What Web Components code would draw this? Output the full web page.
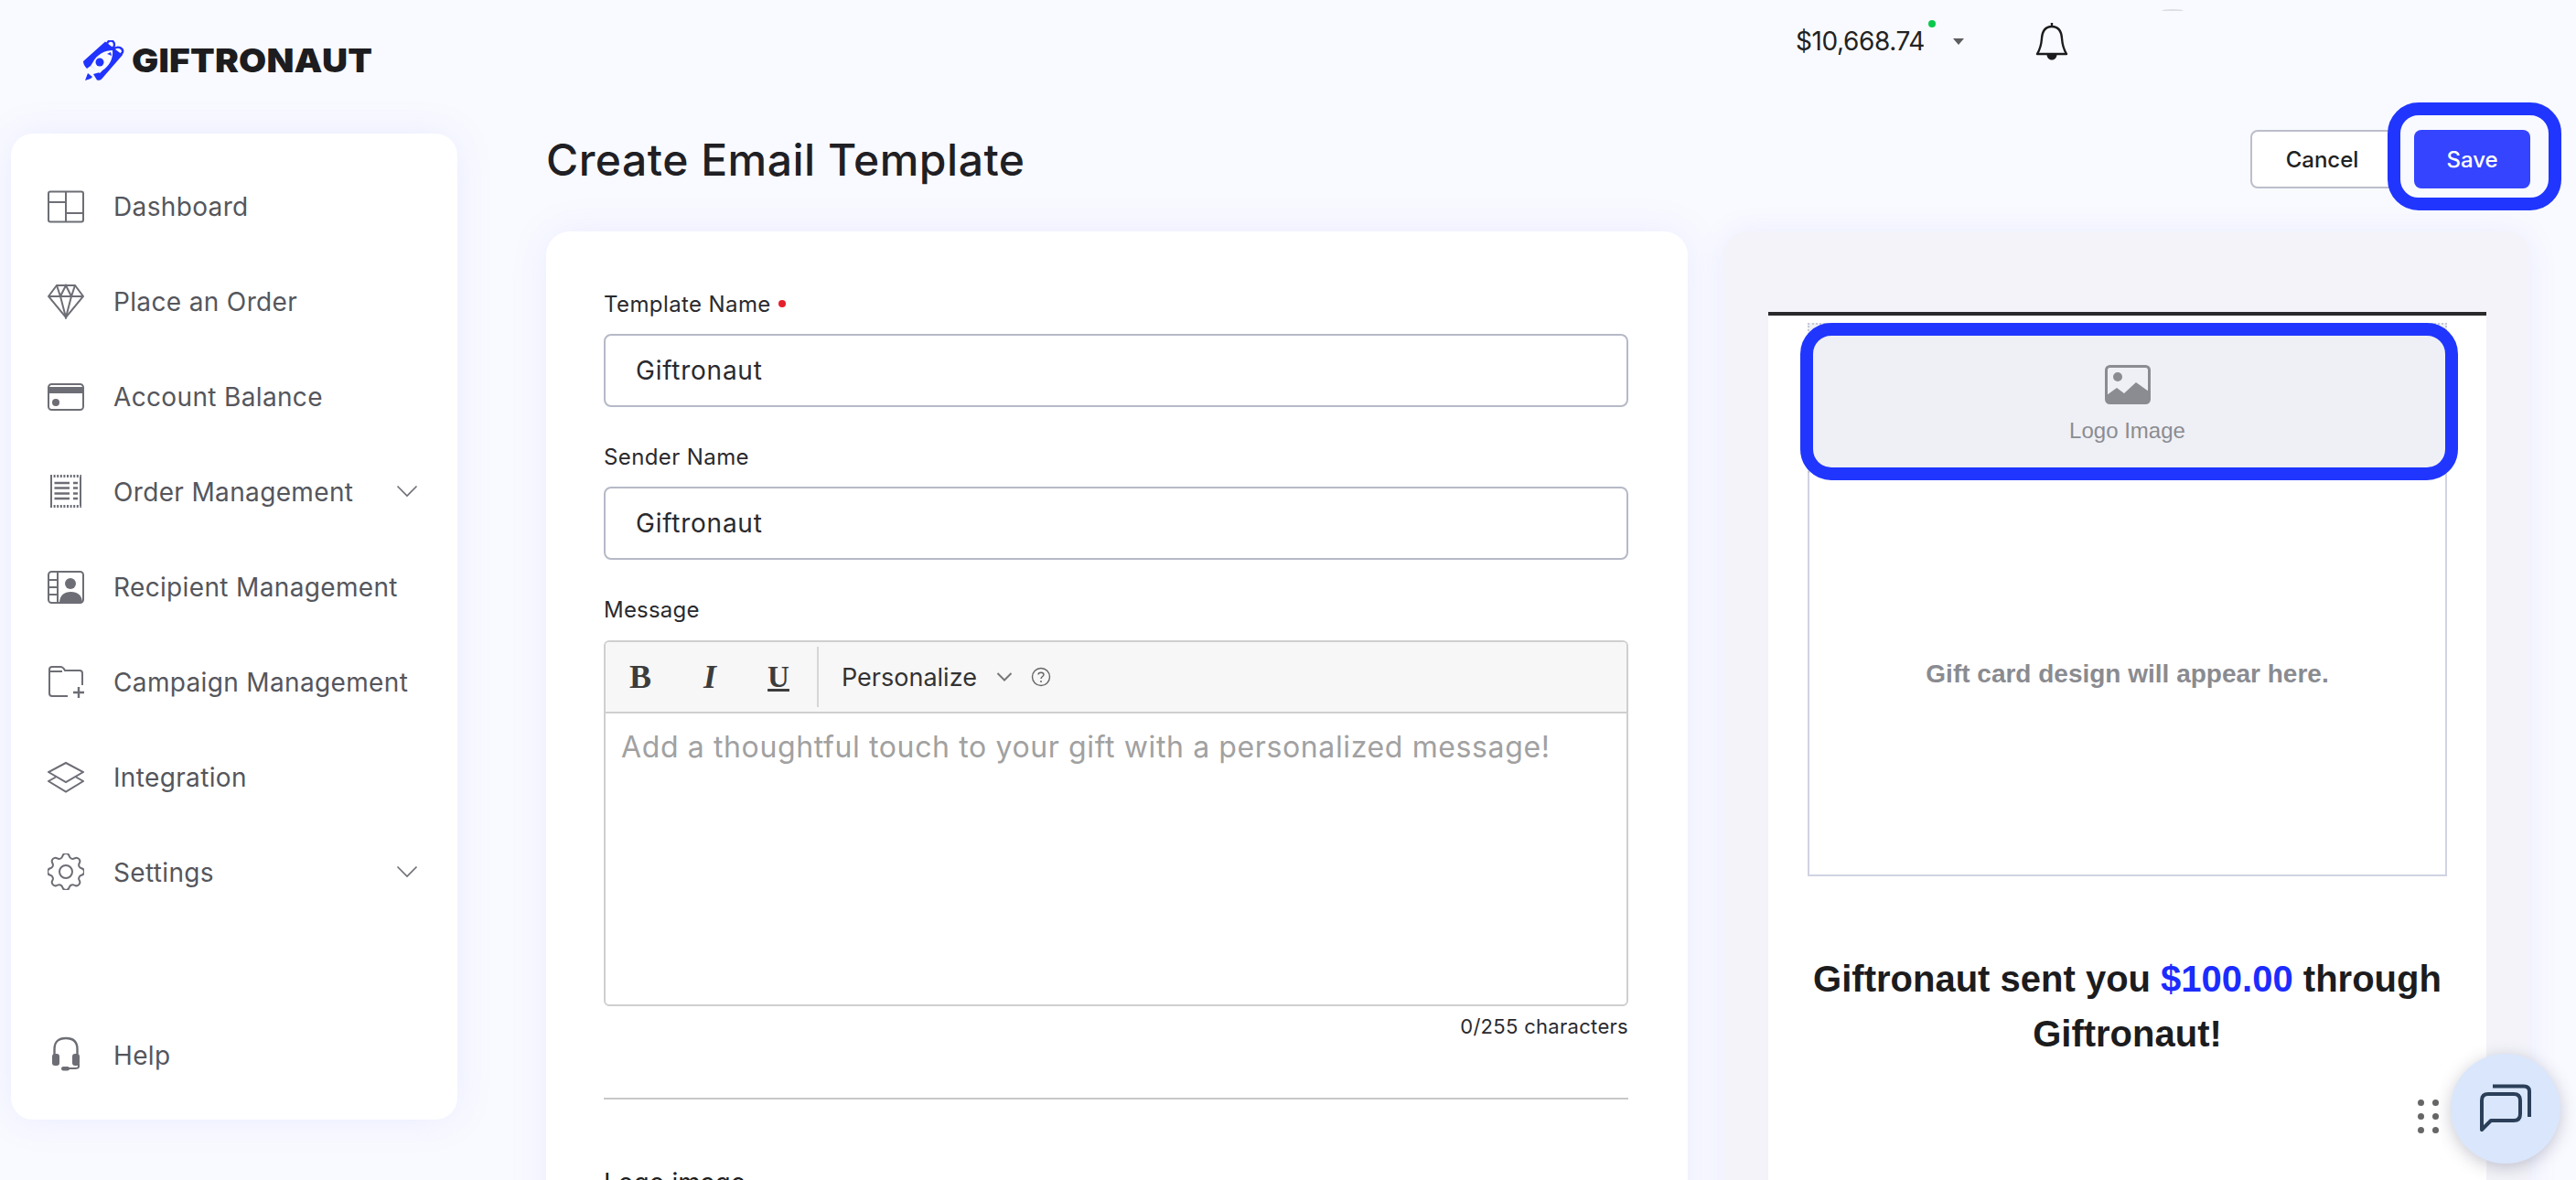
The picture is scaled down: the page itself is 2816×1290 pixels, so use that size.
<!DOCTYPE html>
<html>
<head>
<meta charset="utf-8">
<title>Create Email Template</title>
<style>
  html, body { margin: 0; height: 1290px; overflow: hidden; background: #f9faff; }
  body { font-family: "Inter", "Liberation Sans", sans-serif; color: #1f1f22; }
</style>
</head>
<body>
<gt-app>
  <gt-sidebar slot="side">
    <gt-nav-item icon="dashboard" label="Dashboard"></gt-nav-item>
    <gt-nav-item icon="diamond" label="Place an Order"></gt-nav-item>
    <gt-nav-item icon="card" label="Account Balance"></gt-nav-item>
    <gt-nav-item icon="receipt" label="Order Management" chevron></gt-nav-item>
    <gt-nav-item icon="recipient" label="Recipient Management"></gt-nav-item>
    <gt-nav-item icon="folder" label="Campaign Management"></gt-nav-item>
    <gt-nav-item icon="layers" label="Integration"></gt-nav-item>
    <gt-nav-item icon="gear" label="Settings" chevron></gt-nav-item>
    <gt-nav-item slot="bottom" icon="headset" label="Help"></gt-nav-item>
  </gt-sidebar>
  <gt-account slot="account"></gt-account>
  <gt-page-head slot="head" heading="Create Email Template"></gt-page-head>
  <gt-form-card slot="form">
    <gt-field label="Template Name" value="Giftronaut" required></gt-field>
    <gt-field label="Sender Name" value="Giftronaut"></gt-field>
    <gt-editor></gt-editor>
  </gt-form-card>
  <gt-preview slot="preview"></gt-preview>
</gt-app>
<gt-chat></gt-chat>

<script>
// App frame
class GtApp extends HTMLElement {
  constructor() {
    super();
    this.attachShadow( {mode: 'open'} ).innerHTML = `
    <style>
    :host { display: grid; grid-template-columns: 488px 2169px; column-gap: 97px; padding-left: 12px; height: 1290px; overflow: hidden; }
    .left { display: flex; flex-direction: column; }
    .logo { height: 146px; flex: none; display: flex; align-items: flex-start; padding: 44px 0 0 78px; box-sizing: border-box; gap: 8px; }
    .logo svg { flex: none; }
    .logo span { font: 900 36px/44px "Inter", sans-serif; color: #1d1d1f; letter-spacing: 0.2px; transform: scaleX(1.08); transform-origin: left; }
    .right { display: flex; flex-direction: column; }
    .cards { display: grid; grid-template-columns: 1248px 882px; column-gap: 39px; margin-top: 47px; }
    </style>
    <div class="left">
      <div class="logo">
        <svg width="46" height="46" viewBox="0 0 46 46">
          <path fill="#2133ff" d="M1 23L25 1.500L44 16L21 42.500Q19 44.500 16 43.500L12 37L19 35L9 28L5 31Q1 27 1 23Z"/>
          <path fill="none" stroke="#2133ff" stroke-width="2.400" d="M27 5C27 -1 35 -1 35 5C35 8 33 9 30 9M34 10C39 5 45 9 44 13C43 16 40 16 37 14"/>
          <path fill="#f9faff" d="M33 11C25 11 16 15 11 25L9 28L19 36L22 33C30 28 34 19 33 11Z"/>
          <circle cx="19" cy="24" r="4.500" fill="#2133ff"/>
          <path fill="#2133ff" d="M27 15L31 13L32 17Q28 15 27 15Z"/>
          <path fill="#2133ff" d="M3 44L6 36L11 40L9 42Z"/>
        </svg>
        <span>GIFTRONAUT</span>
      </div>
      <slot name="side"></slot>
    </div>
    <div class="right">
      <slot name="account"></slot>
      <slot name="head"></slot>
      <div class="cards">
        <slot name="form"></slot>
        <slot name="preview"></slot>
      </div>
    </div>
    `;
  }
}

// Sidebar card
class GtSidebar extends HTMLElement {
  constructor() {
    super();
    this.attachShadow( {mode: 'open'} ).innerHTML = `
    <style>
    :host { display: flex; flex-direction: column; height: 1078px; box-sizing: border-box; padding: 27px 0 19px; background: #fff; border-radius: 24px; box-shadow: 0 0 40px rgba(120,130,255,.12); }
    .bottom { margin-top: auto; display: block; }
    </style>
    <slot></slot>
    <div class="bottom"><slot name="bottom"></slot></div>
    `;
  }
}

// Icons for the nav, all on a 40x40 box
const NAV_ICONS = {
  dashboard: '<rect x="1" y="4.5" width="38" height="33" rx="2"/><path d="M20 4.5V37.5M1 16H20M20 28H39"/>',
  diamond: '<path d="M10 3H30L39 15L20 38L1 15Z"/><path d="M1 15H39M10 3L14 15L20 38L26 15L30 3M14 15L20 3L26 15"/>',
  card: '<rect x="1" y="7" width="38" height="28" rx="3.5"/><rect x="1" y="10" width="38" height="7" fill="#6d6e75" stroke="none"/><circle cx="9" cy="27" r="4" fill="#6d6e75" stroke="none"/>',
  receipt: '<path d="M4 4V36M36 4V36"/><path d="M3 3.5H37M3 36.5H37" stroke-dasharray="2 1.6" stroke-width="3"/><path d="M7.5 11H24M7.5 16.500H24M7.5 22.500H24M7.5 28H24M28 11H33M28 16.500H33M28 22.500H33M28 28H33" stroke-width="2.4"/>',
  recipient: '<rect x="1" y="4" width="38" height="34" rx="3.5"/><path d="M11 4V38M1 13H11M1 21H11M1 29H11"/><circle cx="25" cy="17" r="6" fill="#6d6e75" stroke="none"/><path fill="#6d6e75" stroke="none" d="M13 38C13 30 18 26 25.500 26C33 26 38 30 38 38Z"/>',
  folder: '<path d="M22 36H5Q2 36 2 33V7Q2 4 5 4H14Q17 4 19 8H35Q38 8 38 11V24"/><path d="M2 9H16"/><path d="M34 26V38M28 32H40" stroke-width="2.4"/>',
  layers: '<path d="M20 5L39 15L20 26L1 15Z"/><path d="M9 20.500L1 25L20 36.500L39 25L31 20.500"/>',
  gear: '<path transform="translate(-6.600 -6.600) scale(2.220)" stroke-width=".9" d="M10.325 4.317c.426-1.756 2.924-1.756 3.35 0a1.724 1.724 0 002.573 1.066c1.543-.94 3.31.826 2.37 2.37a1.724 1.724 0 001.065 2.572c1.756.426 1.756 2.924 0 3.35a1.724 1.724 0 00-1.066 2.573c.94 1.543-.826 3.31-2.37 2.37a1.724 1.724 0 00-2.572 1.065c-.426 1.756-2.924 1.756-3.35 0a1.724 1.724 0 00-2.573-1.066c-1.543.94-3.31-.826-2.37-2.37a1.724 1.724 0 00-1.065-2.572c-1.756-.426-1.756-2.924 0-3.35a1.724 1.724 0 001.066-2.573c-.94-1.543.826-3.31 2.37-2.37.996.608 2.296.07 2.572-1.065z"/><circle cx="20" cy="20" r="7"/>',
  headset: '<path d="M7.500 20V14Q7.500 2 20 2Q32.500 2 32.500 14V20" stroke-width="2.400"/><rect x="5" y="19" width="8" height="13" rx="3" fill="#6d6e75" stroke="none"/><rect x="27" y="19" width="8" height="13" rx="3" fill="#6d6e75" stroke="none"/><path d="M34 30V33Q34 35 30 35H23"/><rect x="15" y="33" width="9" height="4.500" rx="2.200" fill="#6d6e75" stroke="none"/>'
};

class GtNavItem extends HTMLElement {
  constructor() {
    super();
    this.attachShadow( {mode: 'open'} );
  }

  connectedCallback() {
    const icon = NAV_ICONS[this.getAttribute( 'icon' )] || '';
    const chevron = this.hasAttribute( 'chevron' )
      ? '<svg class="chev" width="24" height="14" viewBox="0 0 24 14"><path d="M1.500 1.500L12 12L22.500 1.500" fill="none" stroke="#6d6e75" stroke-width="1.600"/></svg>'
      : '';
    this.shadowRoot.innerHTML = `
    <style>
    :host { display: flex; align-items: center; height: 104px; padding: 0 43px 0 40px; box-sizing: border-box; }
    .icon { flex: none; fill: none; stroke: #6d6e75; stroke-width: 2; }
    span { margin: 2px 0 0 32px; font-size: 28px; letter-spacing: 0.35px; color: #55565c; white-space: nowrap; }
    .chev { flex: none; margin-left: auto; }
    </style>
    <svg class="icon" width="40" height="40" viewBox="0 0 40 40">${icon}</svg>
    <span>${this.getAttribute( 'label' )}</span>
    ${chevron}
    `;
  }
}

// Balance and bell in the top strip
class GtAccount extends HTMLElement {
  constructor() {
    super();
    this.attachShadow( {mode: 'open'} ).innerHTML = `
    <style>
    :host { display: flex; align-items: center; height: 90px; padding-left: 1366px; position: relative; }
    .balance { font-size: 28px; letter-spacing: -0.4px; color: #222; }
    .dot { position: absolute; left: 1511px; top: 22px; width: 8px; height: 8px; border-radius: 50%; background: #0bc94c; }
    .caret { margin-left: 31px; width: 0; height: 0; border: 6px solid transparent; border-top: 7px solid #5d5d60; border-bottom: 0; }
    .bell { margin-left: 78px; margin-top: -1px; }
    .arc { position: absolute; left: 1766px; top: 10px; width: 24px; height: 2px; border-radius: 12px 12px 0 0 / 2px 2px 0 0; background: #dcdde6; }
    </style>
    <span class="balance">$10,668.74</span>
    <span class="dot"></span>
    <span class="caret"></span>
    <svg class="bell" width="36" height="42" viewBox="0 0 36 42">
      <path d="M18 1V5M18 5C10 5 7.500 11 7 18C6.500 25 5 30 2 35H34C31 30 29.500 25 29 18C28.500 11 26 5 18 5Z" fill="none" stroke="#1c1c1e" stroke-width="2.400" stroke-linejoin="round"/>
      <path d="M12.500 36H23.500C23 40 20.500 41.500 18 41.500C15.500 41.500 13 40 12.500 36Z" fill="#1c1c1e"/>
    </svg>
    <span class="arc"></span>
    `;
  }
}

// Page heading with actions
class GtPageHead extends HTMLElement {
  constructor() {
    super();
    this.attachShadow( {mode: 'open'} );
  }

  connectedCallback() {
    this.shadowRoot.innerHTML = `
    <style>
    :host { display: flex; align-items: center; height: 64px; margin-top: 52px; position: relative; }
    h1 { margin: 0; font-size: 48px; font-weight: 500; letter-spacing: 0.5px; color: #202024; }
    .actions { margin-left: auto; margin-right: 0; display: flex; gap: 19px; }
    button { height: 64px; border-radius: 8px; font: 500 24px "Inter", sans-serif; box-sizing: border-box; padding: 0; }
    .cancel { width: 160px; background: #fff; border: 2px solid #bcbecb; color: #222; padding-right: 3px; }
    .save { width: 127px; background: #3444ff; border: 0; color: #fff; }
    .ring { position: absolute; right: -34px; top: -30px; width: 190px; height: 118px; box-sizing: border-box; border: 14px solid #2036ff; border-radius: 34px; }
    </style>
    <h1>${this.getAttribute( 'heading' )}</h1>
    <div class="actions">
      <button class="cancel">Cancel</button>
      <button class="save">Save</button>
    </div>
    <div class="ring"></div>
    `;
  }
}

// Left card
class GtFormCard extends HTMLElement {
  constructor() {
    super();
    this.attachShadow( {mode: 'open'} ).innerHTML = `
    <style>
    :host { display: block; background: #fff; border-radius: 26px; padding: 62px 65px 0 63px; height: 1400px; box-shadow: 0 0 40px rgba(120,130,255,.12); }
    </style>
    <slot></slot>
    `;
  }
}

class GtField extends HTMLElement {
  constructor() {
    super();
    this.attachShadow( {mode: 'open'} );
  }

  connectedCallback() {
    const req = this.hasAttribute( 'required' ) ? '<i></i>' : '';
    this.shadowRoot.innerHTML = `
    <style>
    :host { display: block; height: 167px; }
    label { display: flex; align-items: center; height: 34px; font-size: 24px; letter-spacing: 0.4px; color: #2a2a2e; }
    i { width: 8px; height: 8px; margin-left: 8px; border-radius: 50%; background: #e5202c; }
    .box { margin-top: 16px; height: 80px; box-sizing: border-box; border: 2px solid #b6b9c7; border-radius: 8px; padding-left: 33px; display: flex; align-items: center; font-size: 28px; letter-spacing: 0.75px; color: #2a2a2e; background: #fff; }
    </style>
    <label>${this.getAttribute( 'label' )}${req}</label>
    <div class="box">${this.getAttribute( 'value' )}</div>
    `;
  }
}

// Message editor, counter, rule and the next label
class GtEditor extends HTMLElement {
  constructor() {
    super();
    this.attachShadow( {mode: 'open'} ).innerHTML = `
    <style>
    :host { display: block; }
    label { display: flex; align-items: center; height: 34px; font-size: 24px; letter-spacing: 0.2px; color: #2a2a2e; }
    .frame { margin-top: 17px; height: 400px; box-sizing: border-box; border: 2px solid #cfcfcf; border-radius: 6px; overflow: hidden; }
    .tools { height: 78px; box-sizing: border-box; background: #f7f7f7; border-bottom: 2px solid #cfcfcf; display: flex; align-items: center; }
    .tools b, .tools em, .tools u { font: 700 36px "Liberation Serif", serif; color: #3c3c3c; width: 76px; text-align: center; flex: none; }
    .tools b { margin-left: -1px; width: 78px; }
    .tools em { font-style: italic; margin-left: -1px; }
    .tools u { font-size: 33px; margin-left: -1px; }
    .sep { width: 2px; height: 66px; background: #d6d6d6; margin-left: 4px; }
    .pick { margin-left: 25px; font-size: 27px; color: #333; }
    .chev { margin-left: 21px; }
    .help { margin-left: 20px; }
    .body { padding: 17px 0 0 17px; font-size: 32px; letter-spacing: 0.62px; color: #a1a1a1; white-space: nowrap; }
    .count { text-align: right; margin-top: 9px; height: 30px; font-size: 22px; color: #2a2a2e; letter-spacing: 0.3px; }
    hr { margin: 61px 0 0; border: 0; border-top: 2px solid #c8c8c8; }
    h4 { margin: 74px 0 0; font-size: 28px; font-weight: 400; color: #1f1f22; }
    </style>
    <label>Message</label>
    <div class="frame">
      <div class="tools">
        <b>B</b><em>I</em><u>U</u>
        <div class="sep"></div>
        <span class="pick">Personalize</span>
        <svg class="chev" width="18" height="12" viewBox="0 0 18 12"><path d="M1.500 2L9 9.500L16.500 2" fill="none" stroke="#777" stroke-width="2"/></svg>
        <svg class="help" width="22" height="22" viewBox="0 0 22 22">
          <circle cx="11" cy="11" r="9.500" fill="none" stroke="#666" stroke-width="1.400"/>
          <path d="M8 8.500C8 5.500 14 5.500 14 8.500C14 10.500 11 10.500 11 13" fill="none" stroke="#666" stroke-width="1.400"/>
          <circle cx="11" cy="16" r="1" fill="#666"/>
        </svg>
      </div>
      <div class="body">Add a thoughtful touch to your gift with a personalized message!</div>
    </div>
    <div class="count">0/255 characters</div>
    <hr>
    <h4>Logo image</h4>
    `;
  }
}

// Right card, the email preview
class GtPreview extends HTMLElement {
  constructor() {
    super();
    this.attachShadow( {mode: 'open'} ).innerHTML = `
    <style>
    :host { display: block; background: #f3f3f9; border-radius: 26px; padding: 88px 48px 0 49px; height: 1400px; box-shadow: 0 0 30px rgba(120,130,255,.12); font-family: "Liberation Sans", Arial, sans-serif; }
    .mail { background: #fff; border-top: 4px solid #2a2a2c; height: 1300px; padding: 8px 43px 0; box-sizing: border-box; }
    .logo { position: relative; height: 164px; box-sizing: border-box; border: 2px dotted #c5c7d3; background: #eff0f5; display: flex; flex-direction: column; align-items: center; padding-top: 44px; color: #8b8c92; }
    .logo span { margin-top: 15px; font-size: 24px; line-height: 28px; }
    .ring { position: absolute; left: -10px; right: -14px; top: -2px; height: 172px; box-sizing: border-box; border: 14px solid #2036ff; border-radius: 34px; }
    .design { height: 441px; box-sizing: border-box; border: 2px solid #d0d3e3; border-top: 0; display: flex; align-items: center; justify-content: center; font-size: 28px; font-weight: 700; color: #8a8b90; }
    h2 { margin: 82px 0 0; font-size: 40px; line-height: 60px; font-weight: 700; text-align: center; color: #1c1c1e; }
    h2 em { font-style: normal; color: #1c2cff; }
    </style>
    <div class="mail">
      <div class="logo">
        <svg width="50" height="43" viewBox="0 0 50 43">
          <rect x="1.500" y="1.500" width="47" height="40" rx="4" fill="none" stroke="#8b8c92" stroke-width="3"/>
          <circle cx="14" cy="13" r="5" fill="#8b8c92"/>
          <path d="M2 33L13 25L21 31L34 19L48 29V38Q48 42 44 42H6Q2 42 2 38Z" fill="#8b8c92"/>
        </svg>
        <span>Logo Image</span>
        <div class="ring"></div>
      </div>
      <div class="design">Gift card design will appear here.</div>
      <h2>Giftronaut sent you <em>$100.00</em> through<br>Giftronaut!</h2>
    </div>
    `;
  }
}

// Floating chat launcher
class GtChat extends HTMLElement {
  constructor() {
    super();
    this.attachShadow( {mode: 'open'} ).innerHTML = `
    <style>
    :host { position: fixed; left: 2643px; top: 1152px; display: flex; align-items: center; gap: 13px; }
    .grip { display: grid; grid-template-columns: 7px 7px; gap: 8px 9px; margin-top: 16px; }
    .grip i { width: 7px; height: 7px; border-radius: 50%; background: #666; }
    .bubble { width: 120px; height: 120px; border-radius: 50%; background: #dae6fb; box-shadow: 0 4px 18px rgba(60,60,90,.28); display: flex; align-items: center; justify-content: center; }
    </style>
    <div class="grip"><i></i><i></i><i></i><i></i><i></i><i></i></div>
    <div class="bubble">
      <svg width="56" height="54" viewBox="0 0 56 54" fill="none" stroke="#2b3f59" stroke-width="4">
        <path d="M14 2.500H48Q54 2.500 54 8V36"/>
        <path d="M2 50V18Q2 11 9 11H37Q44 11 44 18V33Q44 40 37 40H12Z" stroke-linejoin="round"/>
      </svg>
    </div>
    `;
  }
}

window.customElements.define( 'gt-app', GtApp );
window.customElements.define( 'gt-sidebar', GtSidebar );
window.customElements.define( 'gt-nav-item', GtNavItem );
window.customElements.define( 'gt-account', GtAccount );
window.customElements.define( 'gt-page-head', GtPageHead );
window.customElements.define( 'gt-form-card', GtFormCard );
window.customElements.define( 'gt-field', GtField );
window.customElements.define( 'gt-editor', GtEditor );
window.customElements.define( 'gt-preview', GtPreview );
window.customElements.define( 'gt-chat', GtChat );
</script>
</body>
</html>
